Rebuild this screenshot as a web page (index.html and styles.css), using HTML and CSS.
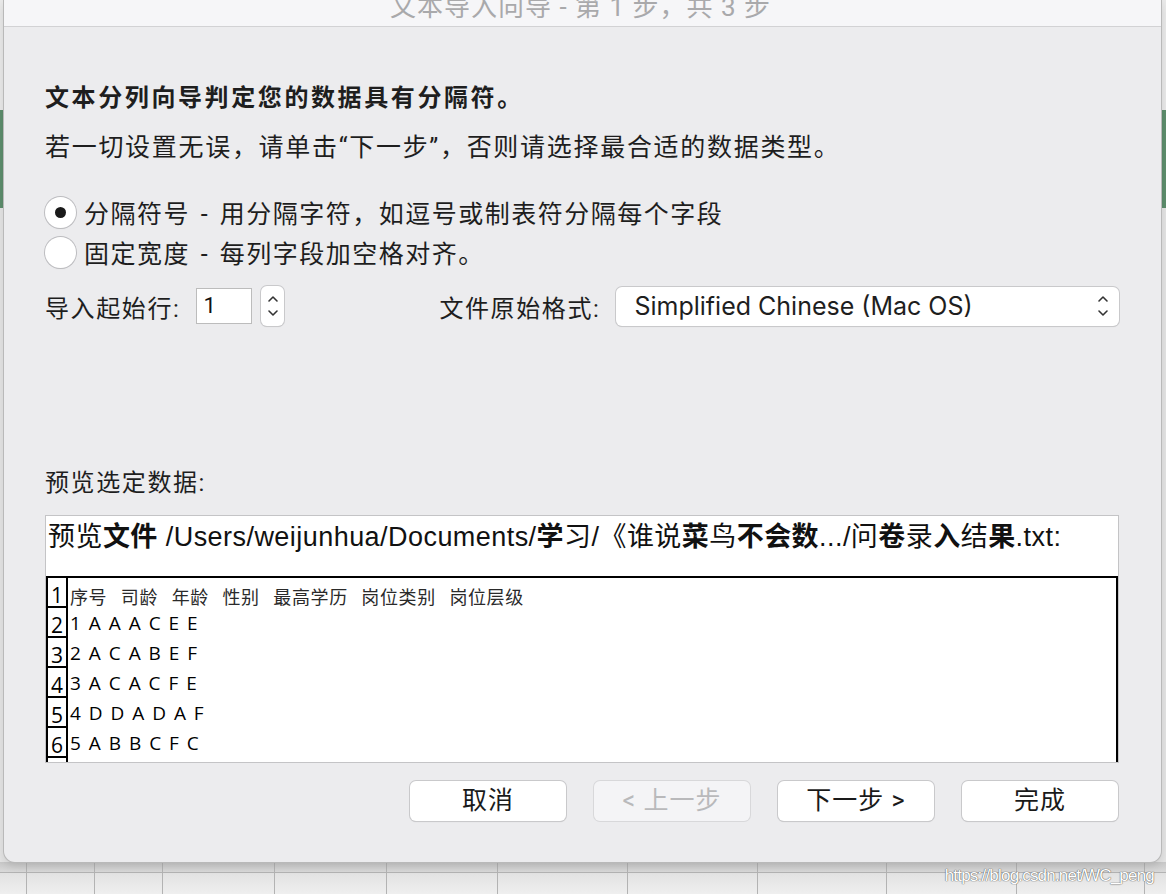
FILE: index.html
```html
<!DOCTYPE html>
<html lang="zh-CN">
<head>
  <meta charset="UTF-8">
  <title>文本导入向导</title>
  <link rel="stylesheet" href="styles.css">
</head>
<body>
  <div id="app">
    <div class="dialog">
      <div class="titlebar"><span>文本导入向导 - 第 1 步，共 3 步</span></div>
      <div class="content">
        <h1 class="lead">文本分列向导判定您的数据具有分隔符。</h1>
        <p class="hint">若一切设置无误，请单击“下一步”，否则请选择最合适的数据类型。</p>

        <div class="options">
          <label class="radio"><i class="dot on"></i>分隔符号 - 用分隔字符，如逗号或制表符分隔每个字段</label>
          <label class="radio"><i class="dot"></i>固定宽度 - 每列字段加空格对齐。</label>
        </div>

        <div class="start-row">
          <div class="start">
            <span class="label">导入起始行:</span>
            <span class="num-input">1</span>
            <span class="stepper">
              <svg width="12" height="28" viewBox="0 0 12 28"><path d="M2 9 L6 5 L10 9 M2 19 L6 23 L10 19" fill="none" stroke="#333" stroke-width="1.6" stroke-linecap="round" stroke-linejoin="round"/></svg>
            </span>
          </div>
          <div class="format">
            <span class="label">文件原始格式:</span>
            <div class="select">
              <span>Simplified Chinese (Mac OS)</span>
              <svg width="12" height="28" viewBox="0 0 12 28"><path d="M2 9 L6 5 L10 9 M2 19 L6 23 L10 19" fill="none" stroke="#333" stroke-width="1.6" stroke-linecap="round" stroke-linejoin="round"/></svg>
            </div>
          </div>
        </div>

        <p class="preview-label">预览选定数据:</p>
        <div class="preview">
          <div class="file">预览<b>文件</b> /Users/weijunhua/Documents/<b>学</b>习/《谁说<b>菜</b>鸟<b>不会数</b>.../问<b>卷</b>录<b>入</b>结<b>果</b>.txt:</div>
          <div class="table">
            <div class="row"><span class="no">1</span><span class="cells head">序号 司龄 年龄 性别 最高学历 岗位类别 岗位层级</span></div>
            <div class="row"><span class="no">2</span><span class="cells">1 A A A C E E</span></div>
            <div class="row"><span class="no">3</span><span class="cells">2 A C A B E F</span></div>
            <div class="row"><span class="no">4</span><span class="cells">3 A C A C F E</span></div>
            <div class="row"><span class="no">5</span><span class="cells">4 D D A D A F</span></div>
            <div class="row"><span class="no">6</span><span class="cells">5 A B B C F C</span></div>
            <div class="row"><span class="no"></span><span class="cells"></span></div>
          </div>
        </div>

        <div class="buttons">
          <span class="btn">取消</span>
          <span class="btn off">&lt; 上一步</span>
          <span class="btn">下一步 &gt;</span>
          <span class="btn">完成</span>
        </div>
      </div>
    </div>
    <div class="sheet">
      <span style="width:27px"></span>
      <span style="width:68px"></span>
      <span style="width:68px"></span>
      <span style="width:112px"></span>
      <span style="width:112px"></span>
      <span style="width:111px"></span>
      <span style="width:130px"></span>
      <span style="width:130px"></span>
      <span style="width:129px"></span>
      <span style="width:130px"></span>
      <span style="width:128px"></span>
    </div>
    <span class="watermark">https://blog.csdn.net/WC_peng</span>
  </div>
</body>
</html>
```

FILE: styles.css
```css
*{
  margin: 0;
  padding: 0;
  box-sizing: border-box;
}
body{
  width: 1166px;
  height: 894px;
  overflow: hidden;
  font-family: "Roboto", "Noto Sans CJK SC", sans-serif;
  color: #222;
  background: linear-gradient(180deg, #e9e9e9 0, #e9e9e9 110px, #5d8d6c 110px, #5d8d6c 208px, #e4e4e4 208px);
}
#app{
  position: relative;
  height: 894px;
  display: flex;
  flex-direction: column;
}
.dialog{
  width: 1157px;
  height: 862px;
  margin-left: 4px;
  background-color: #ececee;
  border-radius: 0 0 11px 11px;
  box-shadow: 0 0 0 1px #b9b9b9, 0 4px 10px rgba(0,0,0,.12);
  position: relative;
  z-index: 1;
}
.titlebar{
  height: 27px;
  overflow: hidden;
  background-color: #f6f6f8;
  border-bottom: 1px solid #d2d2d4;
  text-align: center;
  padding-right: 4px;
}
.titlebar span{
  display: block;
  margin-top: -8px;
  line-height: 30px;
  font-size: 26px;
  letter-spacing: 1px;
  color: #a9a9ab;
}
.content{
  padding: 54px 42px 0 41px;
}
h1.lead{
  font-size: 24px;
  font-weight: 700;
  line-height: 34px;
  color: #1e1e1e;
  letter-spacing: 2.6px;
}
p.hint{
  margin-top: 16px;
  font-size: 25px;
  line-height: 34px;
  letter-spacing: 1.7px;
  color: #1e1e1e;
}
.options{
  margin-top: 29px;
  display: flex;
  flex-direction: column;
  gap: 4px;
}
.radio{
  display: flex;
  align-items: center;
  gap: 8px;
  height: 36px;
  font-size: 25px;
  letter-spacing: 1.5px;
  word-spacing: 3px;
  color: #1e1e1e;
}
.radio .dot{
  width: 31px;
  height: 31px;
  border-radius: 50%;
  background-color: #fff;
  box-shadow: 0 0 0 1px #bdbdc0, 0 1px 1px rgba(0,0,0,.15);
  display: flex;
  align-items: center;
  justify-content: center;
}
.radio .dot.on::after{
  content: '';
  width: 11px;
  height: 11px;
  border-radius: 50%;
  background-color: #1a1a1a;
}
.start-row{
  margin-top: 16px;
  height: 40px;
  display: flex;
  align-items: center;
}
.start, .format{
  display: flex;
  align-items: center;
}
.label{
  font-size: 24px;
  letter-spacing: 1.6px;
  color: #1e1e1e;
}
.num-input{
  width: 56px;
  height: 36px;
  margin-left: 16px;
  padding-left: 6px;
  background-color: #fff;
  border: 1px solid #bcbcbc;
  font-size: 22px;
  line-height: 34px;
  color: #111;
}
.stepper{
  width: 23px;
  height: 40px;
  margin-left: 9px;
  background-color: #fff;
  border-radius: 6px;
  box-shadow: 0 0 0 1px #c9c9cb, 0 1px 1px rgba(0,0,0,.15);
  display: flex;
  align-items: center;
  justify-content: center;
}
.format{
  flex: 1;
  margin-left: 155px;
}
.select{
  flex: 1;
  height: 39px;
  margin-left: 16px;
  padding: 0 10px 0 18px;
  background-color: #fff;
  border-radius: 6px;
  box-shadow: 0 0 0 1px #c9c9cb, 0 1px 1px rgba(0,0,0,.15);
  display: flex;
  align-items: center;
  justify-content: space-between;
  font-family: "Inter", "Roboto", sans-serif;
  font-size: 25px;
  color: #1e1e1e;
}
p.preview-label{
  margin-top: 140px;
  font-size: 24px;
  line-height: 34px;
  letter-spacing: 1.6px;
  color: #1e1e1e;
}
.preview{
  margin-top: 15px;
  height: 248px;
  overflow: hidden;
  background-color: #fff;
  border: 1px solid #c4c4c6;
}
.preview .file{
  height: 60px;
  padding: 2px 0 0 2px;
  font-family: "Liberation Sans", "Noto Sans CJK SC", sans-serif;
  font-size: 27px;
  line-height: 38px;
  letter-spacing: 0.45px;
  color: #111;
  white-space: nowrap;
}
.preview .file b{
  font-weight: 700;
}
.table{
  border-top: 2px solid #000;
  border-left: 2px solid #000;
  border-right: 2px solid #000;
}
.table .row{
  display: flex;
  height: 30px;
}
.table .no{
  width: 20px;
  border-right: 2px solid #000;
  border-bottom: 2px solid #000;
  font-family: "Open Sans", sans-serif;
  font-size: 21px;
  line-height: 34px;
  text-align: center;
  color: #000;
}
.table .cells{
  padding-left: 2px;
  font-family: "Open Sans", sans-serif;
  font-size: 19px;
  font-weight: 500;
  line-height: 30px;
  word-spacing: 3px;
  color: #000;
  white-space: nowrap;
}
.table .cells.head{
  font-family: "Noto Sans CJK SC", sans-serif;
  font-size: 18px;
  font-weight: 400;
  line-height: 36px;
  letter-spacing: 0.6px;
  word-spacing: 9px;
  color: #2a2a2a;
}
.buttons{
  margin-top: 18px;
  display: flex;
  justify-content: flex-end;
  gap: 28px;
  padding-right: 1px;
}
.btn{
  width: 156px;
  height: 40px;
  background-color: #fff;
  border-radius: 6px;
  box-shadow: 0 0 0 1px #c9c9cb, 0 1px 1px rgba(0,0,0,.18);
  text-align: center;
  font-size: 25px;
  line-height: 40px;
  letter-spacing: 1px;
  color: #1a1a1a;
}
.btn.off{
  background-color: #f4f4f6;
  color: #b9b9bb;
  box-shadow: 0 0 0 1px #d8d8da;
}
.sheet{
  flex: 1;
  display: flex;
  background: linear-gradient(180deg, #c8c8c8 0, #d9d9d9 10px, #b3b3b3 10px, #b3b3b3 11px, #e2e2e2 11px, #efefef 100%);
}
.sheet span{
  border-right: 1px solid #b3b3b3;
}
.watermark{
  position: absolute;
  right: 12px;
  bottom: 8px;
  z-index: 2;
  font-family: "Liberation Sans", sans-serif;
  font-size: 17px;
  letter-spacing: -0.8px;
  color: #fff;
  text-shadow: 0 0 1px #555, 0 0 1px #555;
}
```
